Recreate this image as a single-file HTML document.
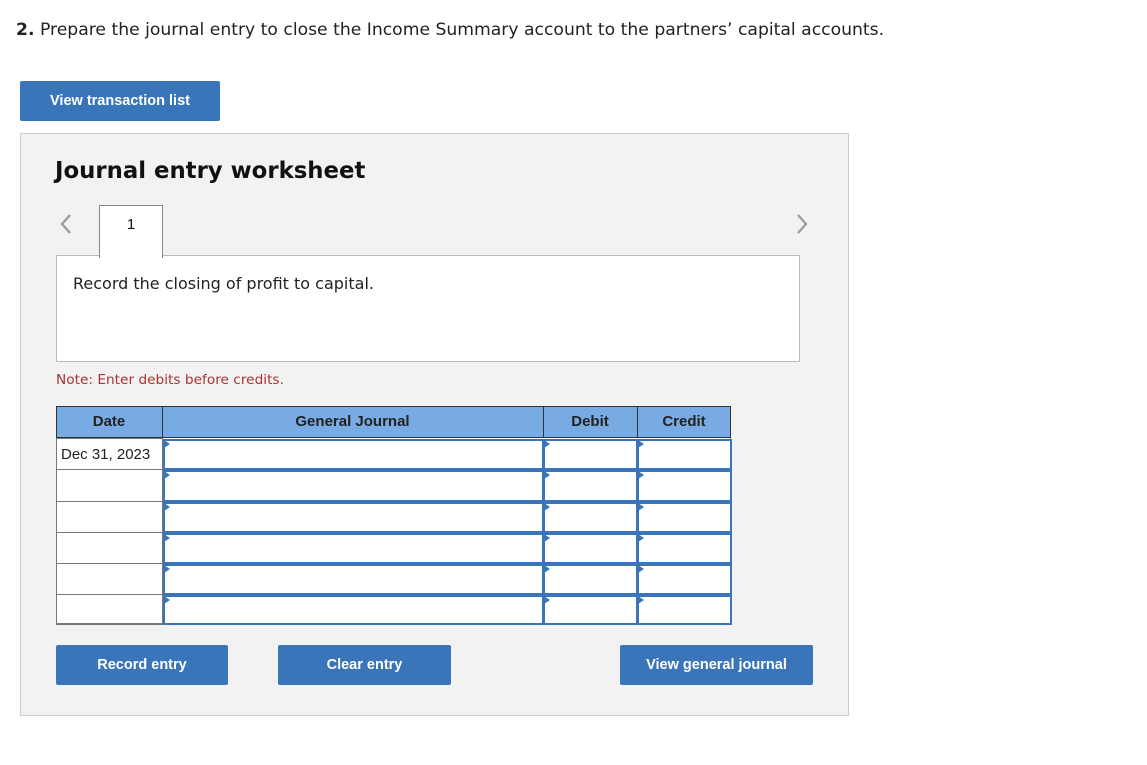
<!DOCTYPE html>
<html><head><style>
body{margin:0;width:1147px;height:765px;background:#fff;font-family:"Liberation Sans",Arial,sans-serif;position:relative;overflow:hidden}
.a{position:absolute}
.dv{font-family:"DejaVu Sans",sans-serif}
.btn{position:absolute;background:#3a75ba;color:#fff;font-weight:bold;font-size:14.5px;text-align:center;border-radius:2px}
.cell{position:absolute;box-sizing:border-box}
.inp{position:absolute;box-sizing:border-box;border:2px solid #3a75ba;background:#fff}
.inp:before{content:"";position:absolute;left:-1px;top:-1px;border-left:6px solid #3a75ba;border-top:4px solid transparent;border-bottom:4px solid transparent}
</style></head><body>
<div class="a dv" style="left:16px;top:20px;font-size:17.2px;color:#222"><b>2.</b> Prepare the journal entry to close the Income Summary account to the partners’ capital accounts.</div>
<div class="btn" style="left:20px;top:81px;width:200px;height:40px;line-height:40px">View transaction list</div>
<div class="a" style="left:20px;top:133px;width:827px;height:581px;background:#f2f2f2;border:1px solid #ccc"></div>
<div class="a dv" style="left:55px;top:158px;font-size:22.8px;font-weight:bold;color:#111">Journal entry worksheet</div>
<svg class="a" style="left:58px;top:213px" width="16" height="22"><path d="M12 2 L4 11 L12 20" stroke="#999" stroke-width="2.2" fill="none"/></svg>
<svg class="a" style="left:794px;top:213px" width="16" height="22"><path d="M4 2 L12 11 L4 20" stroke="#999" stroke-width="2.2" fill="none"/></svg>
<div class="a" style="left:56px;top:255px;width:742px;height:105px;background:#fff;border:1px solid #bbb"></div>
<div class="a" style="left:99px;top:205px;width:62px;height:52px;background:#fff;border:1px solid #888;border-bottom:none;text-align:center;font-size:15px;line-height:38px;color:#111">1</div>
<div class="a dv" style="left:73px;top:274px;font-size:16px;color:#222">Record the closing of profit to capital.</div>
<div class="a dv" style="left:56px;top:372px;font-size:13.7px;color:#a33">Note: Enter debits before credits.</div>
<div class="a" style="left:56px;top:406px;width:675px;height:218px;background:#fff;border:1px solid #777;box-sizing:border-box"></div>
<div class="cell" style="left:56px;top:406px;width:675px;height:32px;background:#78abe3;border:1px solid #333"></div>
<div class="cell" style="left:56px;top:406px;width:107px;height:32px;border-right:1px solid #333;text-align:center;line-height:32px;font-weight:bold;font-size:15px;color:#222">Date</div>
<div class="cell" style="left:162px;top:406px;width:382px;height:32px;border-right:1px solid #333;text-align:center;line-height:32px;font-weight:bold;font-size:15px;color:#222">General Journal</div>
<div class="cell" style="left:543px;top:406px;width:95px;height:32px;border-right:1px solid #333;text-align:center;line-height:32px;font-weight:bold;font-size:15px;color:#222">Debit</div>
<div class="cell" style="left:637px;top:406px;width:94px;height:32px;text-align:center;line-height:32px;font-weight:bold;font-size:15px;color:#222">Credit</div>
<div class="a" style="left:61px;top:446px;font-size:15px;color:#222">Dec 31, 2023</div>
<div id="rows"></div>
<script>
var ys=[438,469,501,532,563,594],h="";
ys.forEach(function(y,i){var hh=(i<5?ys[i+1]:624)-y;
h+='<div class="cell" style="left:56px;top:'+y+'px;width:107px;height:'+(hh+1)+'px;border:1px solid #777"></div>';
h+='<div class="inp" style="left:163px;top:'+(y+1)+'px;width:381px;height:'+hh+'px"></div>';
h+='<div class="inp" style="left:543px;top:'+(y+1)+'px;width:95px;height:'+hh+'px"></div>';
h+='<div class="inp" style="left:637px;top:'+(y+1)+'px;width:95px;height:'+hh+'px"></div>';});
document.getElementById('rows').innerHTML=h;
</script>
<div class="btn" style="left:56px;top:645px;width:172px;height:40px;line-height:40px">Record entry</div>
<div class="btn" style="left:278px;top:645px;width:173px;height:40px;line-height:40px">Clear entry</div>
<div class="btn" style="left:620px;top:645px;width:193px;height:40px;line-height:40px">View general journal</div>
</body></html>
